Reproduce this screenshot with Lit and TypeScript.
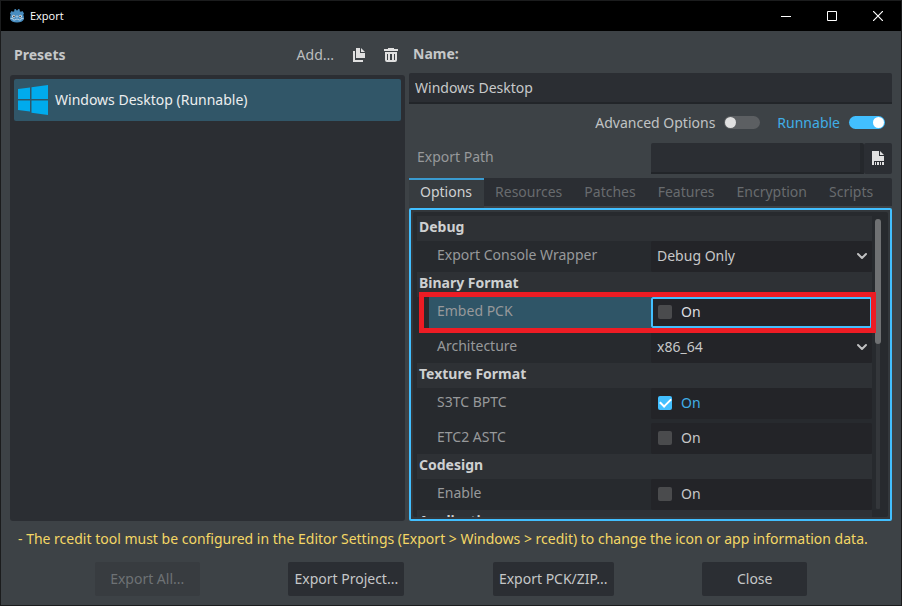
import { LitElement, html, css } from "lit";
import { customElement, property, state } from "lit/decorators.js";
import { classMap } from "lit/directives/class-map.js";

type Option =
  | { kind: "category"; label: string }
  | { kind: "select"; id: string; label: string; values: string[]; spaced?: boolean }
  | { kind: "check"; id: string; label: string; on: boolean; focus?: boolean; spaced?: boolean };

const OPTIONS: Option[] = [
  { kind: "category", label: "Debug" },
  { kind: "select", id: "wrapper", label: "Export Console Wrapper", values: ["Debug Only", "No", "Debug and Release"] },
  { kind: "category", label: "Binary Format" },
  { kind: "check", id: "embed", label: "Embed PCK", on: false, focus: true },
  { kind: "select", id: "arch", label: "Architecture", values: ["x86_64", "x86_32", "arm64"], spaced: true },
  { kind: "category", label: "Texture Format" },
  { kind: "check", id: "s3tc", label: "S3TC BPTC", on: true },
  { kind: "check", id: "etc2", label: "ETC2 ASTC", on: false, spaced: true },
  { kind: "category", label: "Codesign" },
  { kind: "check", id: "codesign", label: "Enable", on: false },
  { kind: "category", label: "Application" },
];

const TABS = ["Options", "Resources", "Patches", "Features", "Encryption", "Scripts"];

const shared = css`
  * { box-sizing: border-box; }
  button, input, select {
    font: inherit;
    color: inherit;
    margin: 0;
    padding: 0;
    border: 0;
    background: none;
    outline: none;
    border-radius: 0;
  }
  svg { display: block; }
`;

@customElement("title-bar")
export class TitleBar extends LitElement {
  static styles = [shared, css`
    :host {
      display: flex;
      align-items: center;
      height: 30px;
      background: #000;
      color: #fff;
      font-size: 11px;
    }
    .logo { margin: 0 5px 0 8px; }
    .title { flex: 1; font-family: "Open Sans", "Noto Sans", sans-serif; }
    .control { width: 46px; height: 30px; display: grid; place-items: center; }
  `];

  render() {
    return html`
      <svg class="logo" width="16" height="16" viewBox="0 0 16 16" aria-hidden="true">
        <path fill="#478cbf" d="M1 5.500L2.500 3l1.500.8 1.300-.6L5.200 1.600 6.800 1l.9 1.400h.6L9.200 1l1.600.6-.1 1.600 1.300.6 1.500-.8L15 5.500l-.8 1.500.6 1v3.500C13.800 13.600 11.500 14.500 8 14.500s-5.800-.9-6.800-3V8l.6-1z"/>
        <circle cx="4.700" cy="8.200" r="1.500" fill="#e3ebf1"/><circle cx="11.300" cy="8.200" r="1.500" fill="#e3ebf1"/>
        <circle cx="4.900" cy="8.300" r=".9" fill="#414042"/><circle cx="11.100" cy="8.300" r=".9" fill="#414042"/>
        <path d="M8 7.500v2" stroke="#e3ebf1" stroke-width="1"/>
        <path d="M1.300 10.300l2.700.4.300 1.300h2l.3-.8h2.800l.3.800h2l.3-1.300 2.700-.4" fill="none" stroke="#c9dcea" stroke-width=".8"/>
      </svg>
      <span class="title">Export</span>
      <button class="control" aria-label="Minimize"><svg width="10" height="10"><path d="M0 5.500h10" stroke="#fff"/></svg></button>
      <button class="control" aria-label="Maximize"><svg width="10" height="10"><path d="M.5.5h9v9h-9z" fill="none" stroke="#fff"/></svg></button>
      <button class="control" aria-label="Close window"><svg width="10" height="10"><path d="M0 0l10 10M10 0L0 10" stroke="#fff" stroke-width="1.200"/></svg></button>
    `;
  }
}

@customElement("preset-list")
export class PresetList extends LitElement {
  static styles = [shared, css`
    :host { display: flex; flex-direction: column; min-width: 0; }
    .head { display: flex; align-items: center; height: 44px; padding: 4px 6px 0 4px; }
    h2 { flex: 1; margin: 0; font-size: 14px; font-weight: 700; color: #c6c8c9; }
    .add { margin-right: 17px; color: #bcbebf; }
    .tool { width: 16px; height: 16px; }
    .tool + .tool { margin-left: 16px; }
    .list { flex: 1; margin: 0; padding: 4px; list-style: none; background: #2b2e33; border-radius: 3px; }
    .item {
      display: flex;
      align-items: center;
      gap: 6px;
      width: 100%;
      height: 42px;
      padding: 0 3px;
      text-align: left;
      color: #eceeef;
      background: #315668;
      border-radius: 2px;
    }
  `];

  render() {
    return html`
      <div class="head">
        <h2>Presets</h2>
        <button class="add">Add...</button>
        <button class="tool" aria-label="Duplicate preset">
          <svg width="16" height="16" viewBox="0 0 16 16" fill="#e0e0e0"><path d="M5 1v10h9V6H9V1zm5 0v4h4zM2 4v11h10v-2H4V4z"/></svg>
        </button>
        <button class="tool" aria-label="Delete preset">
          <svg width="16" height="16" viewBox="0 0 16 16" fill="#e0e0e0"><path d="M5 1v1H1v2h14V2h-4V1zM2 5v8a2 2 0 0 0 2 2h8a2 2 0 0 0 2-2V5zm2 2h1v6H4zm3 0h2v6H7zm4 0h1v6h-1z" fill-rule="evenodd"/></svg>
        </button>
      </div>
      <ul class="list">
        <li>
          <button class="item">
            <svg width="32" height="32" viewBox="0 0 32 32" fill="#00abed"><path d="M1 5l12-1.600V15H1zM14.500 3.200L31 1v14H14.500zM1 16.500h12v11.100L1 26zM14.500 16.500H31V31l-16.500-2.300z"/></svg>
            Windows Desktop (Runnable)
          </button>
        </li>
      </ul>
    `;
  }
}

@customElement("toggle-switch")
export class ToggleSwitch extends LitElement {
  @property() label = "";
  @property({ type: Boolean }) on = false;

  static styles = [shared, css`
    label { display: flex; align-items: center; gap: 9px; color: #c0c3c4; }
    label.on { color: #40aee6; }
    input {
      appearance: none;
      display: flex;
      width: 36px;
      height: 13px;
      border-radius: 7px;
      background: #5c5f62;
    }
    input::before { content: ""; width: 11px; height: 11px; margin: 1px; border-radius: 50%; background: #e0e0e0; }
    input:checked { background: #42bfff; justify-content: flex-end; }
    input:checked::before { background: #fff; }
  `];

  render() {
    return html`<label class=${classMap({ on: this.on })}>${this.label}
      <input type="checkbox" role="switch" .checked=${this.on}
        @change=${(e: Event) => (this.on = (e.target as HTMLInputElement).checked)}></label>`;
  }
}

@customElement("options-inspector")
export class OptionsInspector extends LitElement {
  @state() private checked: Record<string, boolean> = Object.fromEntries(
    OPTIONS.flatMap((o) => (o.kind === "check" ? [[o.id, o.on]] : []))
  );

  static styles = [shared, css`
    :host {
      display: flex;
      flex: 1;
      min-height: 0;
      border: 2px solid #42bfff;
      background: #33373b;
      padding: 2px;
      border-radius: 2px;
    }
    .inner { flex: 1; min-width: 0; display: flex; padding: 4px 7px 0 4px; background: #272a2e; border-radius: 2px; }
    .rows { flex: 1; min-width: 0; overflow: hidden; padding-right: 4px; margin-right: -4px; z-index: 1; }
    .category { margin: 0; height: 25px; padding-left: 2px; font-size: 14px; line-height: 22px; font-weight: 700; color: #ced0d1; background: #2e3135; }
    .row { display: grid; grid-template-columns: 234px 1fr; height: 31px; }
    .spaced { margin-top: 4px; }
    .name { margin-left: 12px; padding-left: 8px; line-height: 28px; color: #97999b; }
    .value { position: relative; display: flex; align-items: center; background: #232428; border-radius: 2px; color: #c7c8c9; }
    .check { gap: 9px; padding: 0 0 2px 7px; }
    .check input {
      appearance: none;
      display: grid;
      place-items: center;
      width: 14px;
      height: 14px;
      border-radius: 2px;
      background: #4a4b4d;
    }
    .check input:checked { background: #42bfff; }
    .check input:checked::before {
      content: "";
      width: 9px;
      height: 5px;
      margin-bottom: 3px;
      border: solid #fff;
      border-width: 0 0 2px 2px;
      transform: rotate(-45deg);
    }
    .check.on { color: #40aee6; }
    select { appearance: none; width: 100%; height: 100%; padding: 0 24px 2px 6px; }
    .chevron { position: absolute; right: 4px; top: 9px; pointer-events: none; }
    .focused { position: relative; }
    .focused .name { background: #2f5567; }
    .focused .value { border: 2px solid #42bfff; padding-left: 5px; color: #dedfe0; }
    .focused::after {
      content: "";
      position: absolute;
      inset: -5px -4px -5px 2px;
      border: 5px solid #ed1c24;
      pointer-events: none;
      z-index: 1;
    }
    .scroll { width: 6px; margin: 3px 0 8px 3px; border-radius: 3px; background: linear-gradient(90deg, transparent 1px, #34373b 1px, #34373b 5px, transparent 5px); }
    .thumb { width: 6px; height: 43%; border-radius: 3px; background: #6f7173; }
  `];

  private renderOption(o: Option) {
    if (o.kind === "category") return html`<h3 class="category">${o.label}</h3>`;
    const focused = o.kind === "check" && !!o.focus;
    return html`
      <div class=${classMap({ row: true, spaced: !!o.spaced, focused })}>
        <label class="name" for=${o.id}>${o.label}</label>
        ${o.kind === "select"
          ? html`<div class="value">
              <select id=${o.id}>${o.values.map((v) => html`<option>${v}</option>`)}</select>
              <svg class="chevron" width="12" height="12" viewBox="0 0 12 12"><path d="M2 4l4 4 4-4" fill="none" stroke="#c0c1c2" stroke-width="2" stroke-linecap="round" stroke-linejoin="round"/></svg>
            </div>`
          : html`<label class=${classMap({ value: true, check: true, on: this.checked[o.id] })}>
              <input id=${o.id} type="checkbox" .checked=${this.checked[o.id]}
                @change=${(e: Event) => (this.checked = { ...this.checked, [o.id]: (e.target as HTMLInputElement).checked })}>
              On</label>`}
      </div>`;
  }

  render() {
    return html`
      <div class="inner">
        <div class="rows">${OPTIONS.map((o) => this.renderOption(o))}</div>
        <div class="scroll"><div class="thumb"></div></div>
      </div>`;
  }
}

@customElement("preset-editor")
export class PresetEditor extends LitElement {
  @state() private tab = "Options";

  static styles = [shared, css`
    :host { display: flex; flex-direction: column; min-width: 0; min-height: 0; }
    .name-label { height: 42px; padding: 10px 4px 0; line-height: 26px; font-weight: 700; color: #c6c8c9; }
    .field { height: 31px; padding: 0 6px; background: #2b2e33; border-bottom: 2px solid #222529; border-radius: 2px 2px 0 0; color: #c7c9ca; min-width: 0; }
    .switches { display: flex; justify-content: flex-end; align-items: center; gap: 17px; height: 39px; padding: 0 7px 2px 0; }
    .path { display: grid; grid-template-columns: 242px 1fr 28px; height: 31px; margin-bottom: 4px; }
    .path label { padding-left: 8px; line-height: 28px; color: #97999b; }
    .path .field { border-right: 4px solid #25282c; }
    .browse { display: grid; place-items: center; padding-bottom: 2px; background: #2b2e33; border-radius: 2px; }
    .tabs { display: flex; height: 28px; margin-bottom: 2px; background: #2b2e33; border-radius: 0 2px 0 0; }
    .tab { padding: 0 11px 2px; line-height: 24px; border-top: 2px solid transparent; color: #686b6e; }
    .tab.active { height: 30px; border-top-color: #3a9bd0; background: #373c40; color: #cfd1d2; padding: 0 12px 4px 11px; }
  `];

  render() {
    return html`
      <label class="name-label" for="name">Name:</label>
      <input id="name" class="field" type="text" value="Windows Desktop">
      <div class="switches">
        <toggle-switch label="Advanced Options"></toggle-switch>
        <toggle-switch label="Runnable" on></toggle-switch>
      </div>
      <div class="path">
        <label for="path">Export Path</label>
        <input id="path" class="field" type="text">
        <button class="browse" aria-label="Browse">
          <svg width="16" height="16" viewBox="0 0 16 16" fill="#e0e0e0"><path d="M2 1v14h2v-4h10V6H9V1zm8 0v4h4zM5 12h1v1H5zm2 0h2v1H7zm3 0h1v1h-1zm2 0h2v1h-2zM5 13h1v2H5zm2 0h2v2H7zm3 0h1v2h-1zm2 0h2v2h-2z"/></svg>
        </button>
      </div>
      <div class="tabs" role="tablist">
        ${TABS.map((t) => html`<button role="tab" aria-selected=${t === this.tab}
          class=${classMap({ tab: true, active: t === this.tab })} @click=${() => (this.tab = t)}>${t}</button>`)}
      </div>
      <options-inspector></options-inspector>
    `;
  }
}

@customElement("app-root")
export class AppRoot extends LitElement {
  static styles = [shared, css`
    :host {
      display: flex;
      flex-direction: column;
      min-height: 100vh;
      box-sizing: border-box;
      border: 1px solid #1b1c1d;
      background: #3d4246;
      font: 14px/20px "Noto Sans", sans-serif;
    }
    main { display: grid; grid-template-columns: 395fr 483fr; gap: 4px; padding: 0 9px; height: calc(100vh - 116px); }
    .warning { margin: 0; padding: 8px 17px; color: #f4d765; line-height: 20px; }
    .actions { display: flex; justify-content: space-evenly; padding: 5px 5px 9px; }
    .action { min-width: 105px; height: 34px; padding: 0 6px; border-radius: 2px; background: #2b2e33; color: #c5c7c8; }
    .action:disabled { background: #383c40; color: #6e7275; }
  `];

  render() {
    return html`
      <title-bar></title-bar>
      <main>
        <preset-list></preset-list>
        <preset-editor></preset-editor>
      </main>
      <p class="warning">- The rcedit tool must be configured in the Editor Settings (Export &gt; Windows &gt; rcedit) to change the icon or app information data.</p>
      <div class="actions">
        <button class="action" disabled>Export All...</button>
        <button class="action">Export Project...</button>
        <button class="action">Export PCK/ZIP...</button>
        <button class="action">Close</button>
      </div>
    `;
  }
}
